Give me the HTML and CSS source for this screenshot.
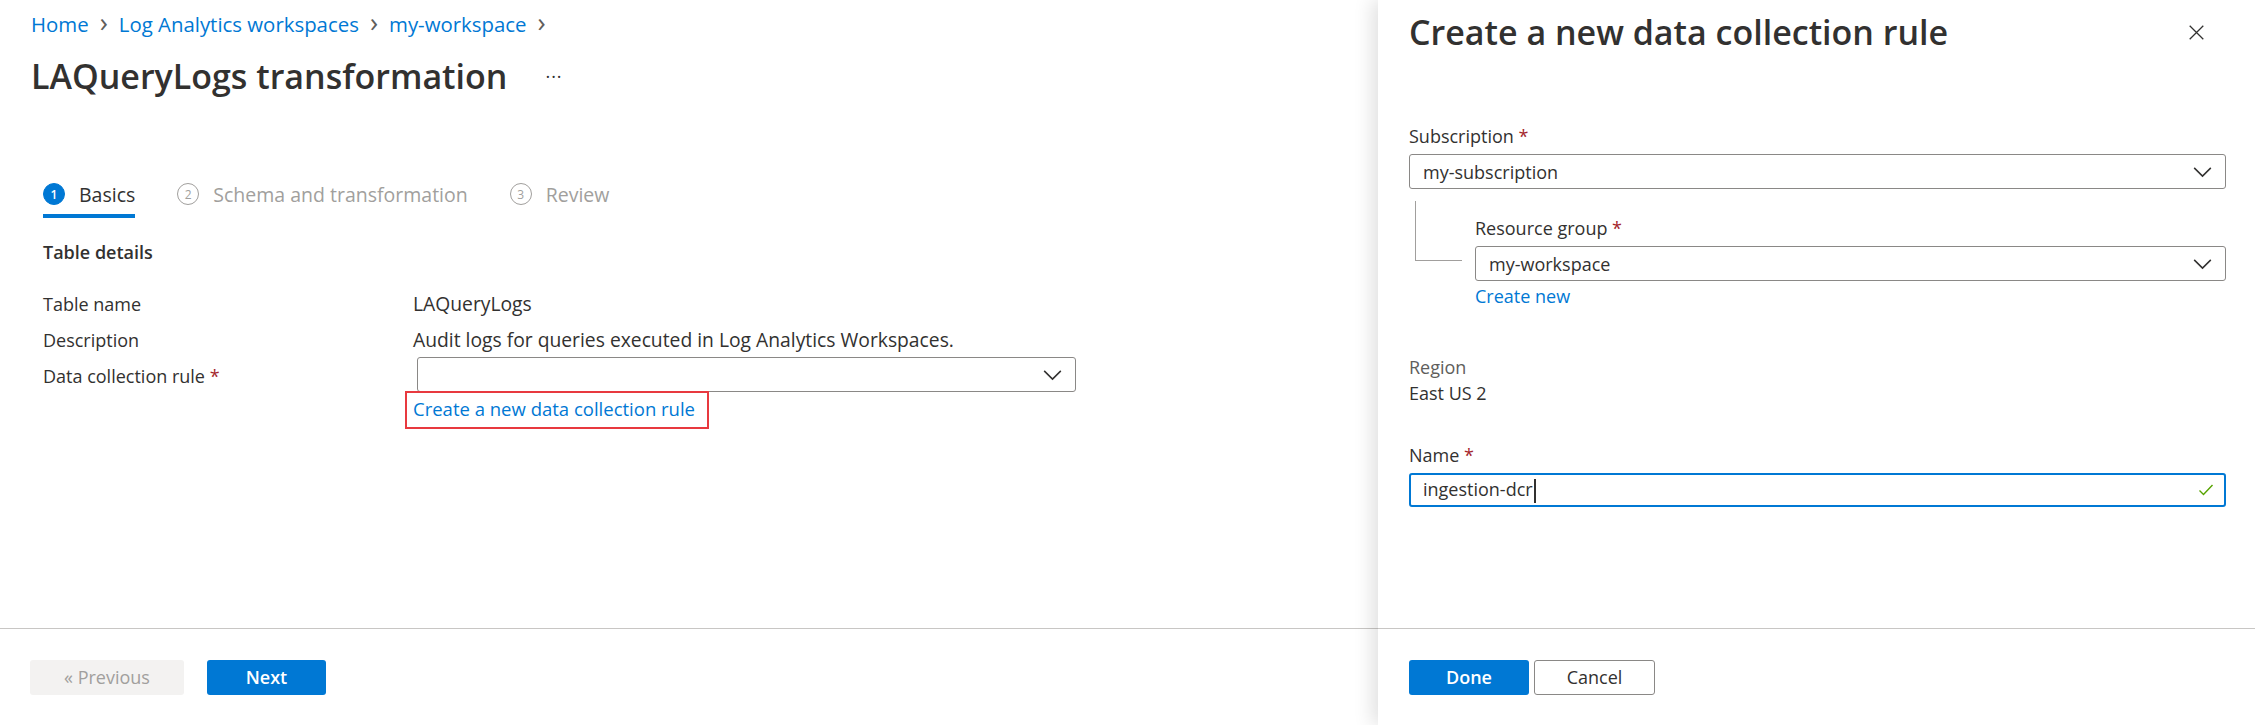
FILE: index.html
```html
<!DOCTYPE html>
<html>
<head>
<meta charset="utf-8">
<link rel="stylesheet" href="styles.css">
</head>
<body>
<div class="page">
  <div class="main">
    <div class="content">
      <nav class="crumbs">
        <a>Home</a><span class="chev">&#x203A;</span>
        <a>Log Analytics workspaces</a><span class="chev">&#x203A;</span>
        <a>my-workspace</a><span class="chev">&#x203A;</span>
      </nav>
      <div class="title-row">
        <h1 class="title">LAQueryLogs transformation</h1>
        <span class="more">&middot;&middot;&middot;</span>
      </div>
      <div class="tabs">
        <div class="tab active"><span class="num">1</span><span class="tab-label">Basics</span></div>
        <div class="tab"><span class="num">2</span><span class="tab-label">Schema and transformation</span></div>
        <div class="tab"><span class="num">3</span><span class="tab-label">Review</span></div>
      </div>
      <div class="section">
        <div class="section-title">Table details</div>
        <div class="grid">
          <div class="lbl">Table name</div><div class="val">LAQueryLogs</div>
          <div class="lbl">Description</div><div class="val">Audit logs for queries executed in Log Analytics Workspaces.</div>
          <div class="lbl">Data collection rule <span class="req">*</span></div>
          <div class="val">
            <div class="select dcr"><span></span><svg class="caret" viewBox="0 0 16 10"><path d="M1 1.5 L8 8.5 L15 1.5" fill="none" stroke="#323130" stroke-width="1.3"/></svg></div>
            <div class="highlight"><a class="link">Create a new data collection rule</a></div>
          </div>
        </div>
      </div>
    </div>
    <div class="footer">
      <button class="btn disabled">&laquo; Previous</button>
      <button class="btn primary next">Next</button>
    </div>
  </div>
  <aside class="panel">
    <div class="panel-body">
      <div class="panel-head">
        <h2 class="panel-title">Create a new data collection rule</h2>
        <svg class="close" viewBox="0 0 20 20"><path d="M2 2 L18 18 M18 2 L2 18" stroke="#323130" stroke-width="1.5"/></svg>
      </div>
      <div class="field sub">
        <div class="flabel">Subscription <span class="req">*</span></div>
        <div class="select"><span>my-subscription</span><svg class="caret" viewBox="0 0 16 10"><path d="M1 1.5 L8 8.5 L15 1.5" fill="none" stroke="#323130" stroke-width="1.3"/></svg></div>
      </div>
      <div class="nested">
        <div class="tree"></div>
        <div class="nested-field">
          <div class="flabel">Resource group <span class="req">*</span></div>
          <div class="select"><span>my-workspace</span><svg class="caret" viewBox="0 0 16 10"><path d="M1 1.5 L8 8.5 L15 1.5" fill="none" stroke="#323130" stroke-width="1.3"/></svg></div>
          <a class="link create-new">Create new</a>
        </div>
      </div>
      <div class="region">
        <div class="rlabel">Region</div>
        <div class="rval">East US 2</div>
      </div>
      <div class="field name">
        <div class="flabel">Name <span class="req">*</span></div>
        <div class="input focused"><span>ingestion-dcr<span class="cursor"></span></span><svg class="check" viewBox="0 0 16 16"><path d="M1.5 8.5 L5.5 12.5 L14.5 3" fill="none" stroke="#57a300" stroke-width="1.4"/></svg></div>
      </div>
    </div>
    <div class="footer panel-footer">
      <button class="btn primary done">Done</button>
      <button class="btn outline">Cancel</button>
    </div>
  </aside>
</div>
</body>
</html>
```
FILE: styles.css
```css
* { box-sizing: border-box; }
html, body { margin: 0; padding: 0; background: #fff; }
body {
  font-family: "Segoe UI", "Open Sans", Roboto, "Liberation Sans", sans-serif;
  font-size: 18px;
  color: #323130;
  width: 2255px;
  height: 725px;
  overflow: hidden;
}
.page { display: flex; height: 725px; }
.main { width: 1378px; display: flex; flex-direction: column; height: 725px; }
.content { flex: 1; padding-left: 31px; }

.crumbs { padding-top: 11px; line-height: 26px; color: #0078d4; display: flex; align-items: center; font-size: 20.4px; }
.crumbs a { color: #0078d4; }
.chev { color: #605e5c; font-size: 27px; margin: 0 11px 0 11px; line-height: 26px; position: relative; top: -2px; }

.title-row { display: flex; align-items: center; margin-top: 16px; height: 46px; }
.title { font-size: 34px; font-weight: 600; margin: 0; line-height: 46px; color: #323130; }
.more { margin-left: 38px; font-size: 18px; letter-spacing: 1px; color: #323130; }

.tabs { display: flex; margin-top: 75px; padding-left: 12px; height: 58px; }
.tab { display: flex; align-items: center; height: 40px; margin-right: 42px; position: relative; color: #a19f9d; font-size: 19.5px; }
.tab .num {
  width: 22px; height: 22px; border-radius: 50%; border: 1.5px solid #a19f9d;
  font-size: 12px; display: flex; align-items: center; justify-content: center; margin-right: 14px;
}
.tab.active { color: #323130; }
.tab.active .num { background: #0078d4; border-color: #0078d4; color: #fff; font-weight: 600; }
.tab.active::after { content: ""; position: absolute; left: 0; right: 0; bottom: -4px; height: 4px; background: #0078d4; }

.section { padding-left: 12px; margin-top: 7px; }
.section-title { font-weight: 600; line-height: 26px; margin-bottom: 26px; }
.grid { display: grid; grid-template-columns: 370px 663px; row-gap: 10px; line-height: 26px; }
.lbl { color: #323130; }
.val { color: #323130; font-size: 19.3px; }
.req { color: #a4262c; }
.select {
  height: 35px; border: 1px solid #8a8886; border-radius: 3px; display: flex; align-items: center;
  justify-content: space-between; padding: 0 13px 0 13px; background: #fff;
}
.caret { width: 19px; height: 12px; }
.dcr { margin-left: 4px; margin-top: -6px; }
.highlight { display: inline-block; border: 2px solid #e8393f; padding: 3px 12px 5px 6px; margin-top: -1px; margin-left: -8px; font-size: 18.5px; }
.link { color: #0078d4; }

.footer { height: 97px; border-top: 1px solid #c8c6c4; display: flex; align-items: flex-start; padding: 31px 30px 0; gap: 23px; }
.btn {
  font-family: inherit; font-size: 18px; height: 35px; border-radius: 3px; border: 1px solid transparent;
  padding: 0; line-height: 33px;
}
.btn.disabled { background: #f3f2f1; color: #a19f9d; width: 154px; }
.btn.primary { background: #0078d4; color: #fff; font-weight: 600; }
.next { width: 119px; }

.panel {
  flex: 1; display: flex; flex-direction: column; height: 725px; position: relative;
  box-shadow: -6px 0 18px rgba(0,0,0,0.12);
  background: #fff;
}
.panel-body { flex: 1; padding: 0 29px 0 31px; }
.panel-head { display: flex; justify-content: space-between; align-items: center; height: 62px; padding-top: 2px; }
.panel-title { margin: 0; font-size: 34px; font-weight: 600; line-height: 50px; color: #323130; }
.close { width: 17px; height: 17px; margin-right: 21px; }

.field.sub { margin-top: 61px; }
.flabel { line-height: 26px; margin-bottom: 5px; }
.nested { display: flex; }
.tree { width: 47px; height: 60px; margin-left: 6px; margin-top: 12px; border-left: 1px solid #a19f9d; border-bottom: 1px solid #a19f9d; margin-right: 13px; }
.nested-field { flex: 1; padding-top: 26px; }
.create-new { display: block; line-height: 26px; margin-top: 2px; }

.region { margin-top: 45px; line-height: 26px; }
.rlabel { color: #605e5c; }
.field.name { margin-top: 36px; }
.input {
  height: 34px; border: 2px solid #0078d4; border-radius: 3px; display: flex; align-items: center;
  justify-content: space-between; padding: 0 10px 0 12px;
}
.cursor { display: inline-block; width: 2px; height: 24px; background: #323130; vertical-align: middle; margin-left: 1px; }
.check { width: 16px; height: 16px; }

.panel-footer { gap: 5px; padding-left: 31px; }
.done { width: 120px; }
.btn.outline { background: #fff; border: 1px solid #8a8886; color: #323130; width: 121px; }
```
